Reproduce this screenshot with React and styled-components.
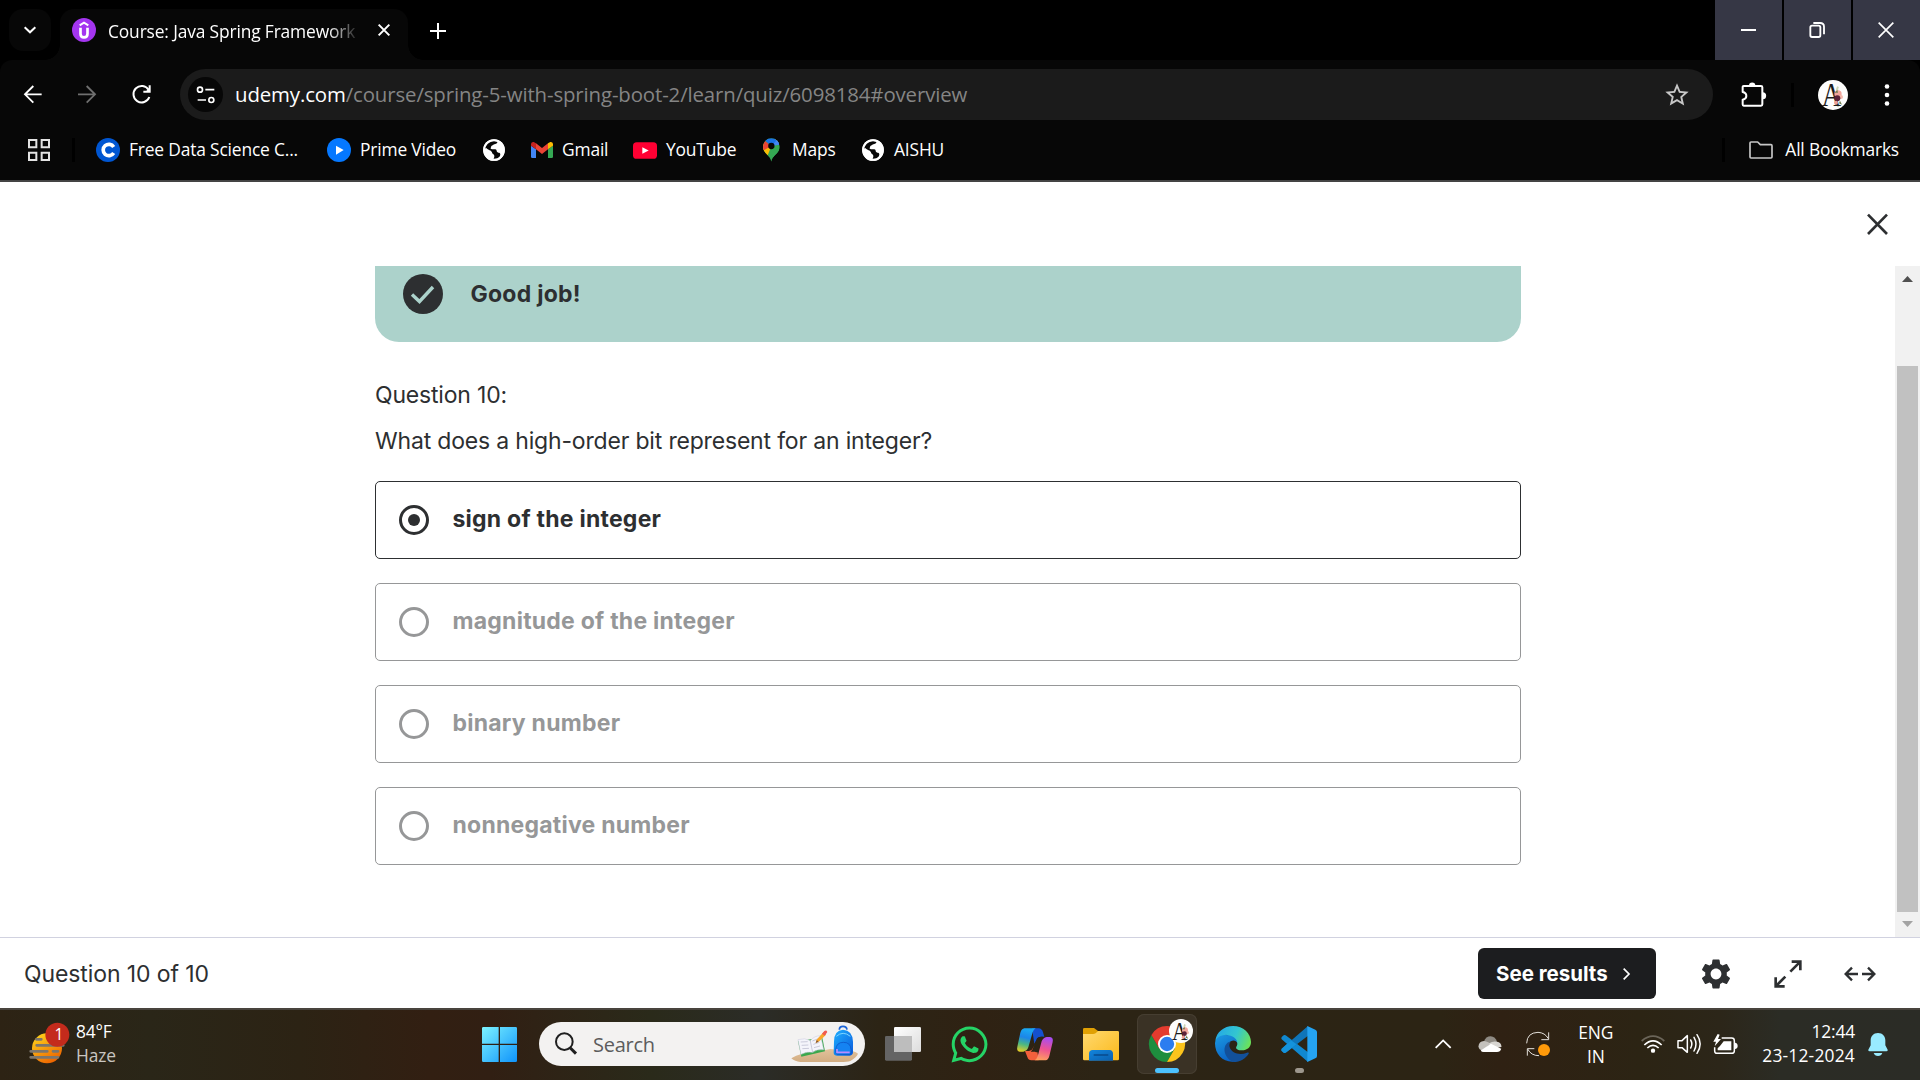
import React from "react";
import styled, { createGlobalStyle, css } from "styled-components";
import { FaWhatsapp } from "react-icons/fa";
import { MdSettings, MdStarBorder } from "react-icons/md";

const GlobalStyle = createGlobalStyle`
  * { box-sizing: border-box; }
  body { margin: 0; background: #000; overflow: hidden; }
  button { border: 0; margin: 0; padding: 0; background: none; color: inherit; font: inherit; }
  svg { display: block; flex: none; overflow: visible; }
`;

const UI_FONT = `"Open Sans", "Noto Sans", sans-serif`;
const PAGE_FONT = `Inter, Roboto, sans-serif`;

/* ---------- shell ---------- */

const Screen = styled.div`
  width: 1920px;
  height: 1080px;
  display: flex;
  flex-direction: column;
  font-family: ${UI_FONT};
  font-size: 17.4px;
  letter-spacing: -0.17px;
  white-space: nowrap;
`;

/* ---------- tab strip ---------- */

const TabStrip = styled.header`
  height: 60px;
  flex: none;
  display: flex;
  background: #000;
  color: #fff;
`;

const TabSearch = styled.button`
  width: 42px;
  height: 42px;
  margin: 9px 9px 0 9px;
  border-radius: 14px;
  background: #070707;
  display: grid;
  place-items: center;
`;

const Tab = styled.div`
  position: relative;
  width: 348px;
  height: 51px;
  margin-top: 9px;
  padding: 0 18px 9px 12px;
  border-radius: 14px 14px 0 0;
  background: #070707;
  display: flex;
  align-items: center;

  &::before,
  &::after {
    content: "";
    position: absolute;
    bottom: 0;
    width: 15px;
    height: 15px;
  }
  &::before {
    right: 100%;
    background: radial-gradient(circle at 0 0, transparent 14.5px, #070707 15px);
  }
  &::after {
    left: 100%;
    background: radial-gradient(circle at 100% 0, transparent 14.5px, #070707 15px);
  }
`;

const TabTitle = styled.span`
  width: 252px;
  margin: 2px 0 0 12px;
  line-height: 24px;
  letter-spacing: -0.15px;
  mask-image: linear-gradient(90deg, #000 220px, transparent 252px);
`;

const TabClose = styled.button`
  margin-left: auto;
`;

const NewTab = styled.button`
  margin: 22px 0 0 22px;
  height: 17px;
`;

const WindowControls = styled.div`
  margin-left: auto;
  display: flex;
  gap: 2px;
`;

const WindowButton = styled.button`
  width: 67px;
  height: 60px;
  padding-right: ${(p) => p.$shift || 0}px;
  background: #363745;
  display: grid;
  place-items: center;
`;

/* ---------- toolbar ---------- */

const ToolbarBack = styled.div`
  flex: none;
  background: #000;
`;

const Toolbar = styled.div`
  height: 69px;
  padding: 0 27px 0 24px;
  border-radius: 12px 12px 0 0;
  background: #070707;
  color: #fff;
  display: flex;
  align-items: center;
`;

const NavButtons = styled.nav`
  display: flex;
  gap: 36px;
  margin-right: 29px;
`;

const AddressBar = styled.div`
  width: 1533px;
  height: 51px;
  flex: none;
  border-radius: 26px;
  padding: 0 22px 0 8px;
  background: #1b1b1b;
  display: flex;
  align-items: center;
`;

const SiteInfo = styled.button`
  width: 35px;
  height: 35px;
  border-radius: 50%;
  background: #070707;
  display: grid;
  place-items: center;
`;

const Address = styled.div`
  margin: 0 auto 2px 12px;
  font-size: 20.4px;
  letter-spacing: -0.12px;
  line-height: 28px;
  color: #858585;
`;

const Host = styled.span`
  color: #fff;
`;

const Divider = styled.i`
  width: 3px;
  height: 24px;
  background: #000;
`;

const ToolbarTools = styled.div`
  margin-left: 28px;
  display: flex;
  align-items: center;
  gap: 24px;
`;

const MenuDots = styled.button`
  margin-left: 9px;
`;

/* ---------- bookmarks ---------- */

const BookmarkBar = styled.div`
  height: 53px;
  flex: none;
  padding: 0 21px 9px 28px;
  border-bottom: 2px solid #444;
  background: #070707;
  color: #fff;
  display: flex;
  align-items: center;
`;

const BookmarkList = styled.div`
  display: flex;
  align-items: center;
`;

const BarDivider = styled(Divider)`
  margin: 0 21px 0 22px;
`;

const Bookmark = styled.a`
  width: ${(p) => p.$width}px;
  display: flex;
  align-items: center;
  gap: ${(p) => p.$gap || 10}px;
`;

const BookmarkLabel = styled.span`
  line-height: 24px;
  margin-bottom: 2px;
`;

const AllBookmarks = styled.div`
  margin-left: auto;
  display: flex;
  align-items: center;
  gap: 12px;

  ${Divider} {
    margin-right: 12px;
  }
`;

/* ---------- quiz page ---------- */

const Page = styled.main`
  flex: 1;
  min-height: 0;
  background: #fff;
  color: #2d2f31;
  font-family: ${PAGE_FONT};
  font-size: 23px;
  letter-spacing: -0.18px;
  display: flex;
  flex-direction: column;
`;

const PageHeader = styled.div`
  height: 84px;
  flex: none;
  padding-right: 32px;
  display: flex;
  align-items: center;
  justify-content: flex-end;
`;

const ScrollArea = styled.div`
  height: 671px;
  display: flex;
`;

const QuizBody = styled.section`
  flex: 1;
  padding: 0 374px 0 375px;
`;

const Banner = styled.div`
  height: 76px;
  padding: 8px 28px 0;
  border-radius: 0 0 24px 24px;
  background: #acd2cb;
  display: flex;
  align-items: flex-start;
  gap: 27.5px;
  font-weight: 700;
  letter-spacing: 0.25px;
  line-height: 40px;
`;

const QuestionNumber = styled.div`
  margin-top: 38px;
  line-height: 30px;
`;

const QuestionText = styled.p`
  margin: 16px 0 25px;
  line-height: 30px;
`;

const Answers = styled.ul`
  list-style: none;
  margin: 0;
  padding: 0;
  display: flex;
  flex-direction: column;
  gap: 24px;
`;

const Answer = styled.li`
  height: 78px;
  padding-left: 23px;
  border: 1px solid currentColor;
  border-radius: 5px;
  color: ${(p) => (p.$selected ? "#2d2f31" : "#969798")};
  display: flex;
  align-items: center;
  gap: 23.5px;
  font-weight: 700;
  letter-spacing: 0.24px;
`;

const AnswerText = styled.span`
  line-height: 30px;
  margin-bottom: 2px;
`;

const Radio = styled.span`
  width: 30px;
  height: 30px;
  border: 3px solid currentColor;
  border-radius: 50%;
  display: grid;
  place-items: center;

  ${(p) =>
    p.$checked &&
    css`
      &::after {
        content: "";
        width: 12px;
        height: 12px;
        border-radius: 50%;
        background: currentColor;
      }
    `}
`;

const ScrollBar = styled.div`
  width: 25px;
  background: #f1f1f1;
  padding: 10px 2px;
  display: flex;
  flex-direction: column;
  align-items: center;
`;

const ScrollThumb = styled.div`
  width: 21px;
  height: 546px;
  margin: 84px 0 9px;
  background: #c1c1c1;
`;

const QuizFooter = styled.footer`
  height: 71px;
  flex: none;
  padding: 1px 42px 0 24px;
  border-top: 1px solid #d1d2e0;
  display: flex;
  align-items: center;
  letter-spacing: -0.1px;
`;

const FooterTools = styled.div`
  margin-left: auto;
  display: flex;
  align-items: center;
`;

const ResultsButton = styled.button`
  width: 178px;
  height: 51px;
  margin-right: 42px;
  padding: 0 26px 0 18px;
  border-radius: 6px;
  background: #1c1d1f;
  color: #fff;
  display: flex;
  align-items: center;
  justify-content: space-between;
  font-size: 20.5px;
  font-weight: 700;
  letter-spacing: 0;
`;

const FooterIcon = styled.button`
  width: 36px;
  display: grid;
  place-items: center;
  margin-right: ${(p) => p.$after || 0}px;
`;

/* ---------- taskbar ---------- */

const TaskbarRoot = styled.div`
  height: 72px;
  flex: none;
  padding-bottom: 2px;
  border-top: 2px solid #49443d;
  background: linear-gradient(90deg, #2d2314 0, #2a2618 150px, #2c2314 300px, #321f12 430px, #311f13 490px, #2a2a1a 650px, #2b2c27 760px, #2c2415 880px, #2f2213 980px, #2c2415 1100px, #2c2414 1440px, #2f2113 1500px, #2c2414 1640px, #2c2619 1720px, #2b2c25 1780px, #2b2c26 1920px);
  color: #fff;
  display: flex;
  align-items: center;
`;

const Weather = styled.div`
  width: 453px;
  padding: 0 0 2px 29px;
  display: flex;
  align-items: center;
  gap: 6px;
`;

const Stack = styled.div`
  display: flex;
  flex-direction: column;
  align-items: ${(p) => p.$align || "flex-start"};
  line-height: 24px;
  padding-bottom: ${(p) => p.$lift || 0}px;
`;

const Muted = styled.span`
  color: #c9c6c1;
`;

const DateText = styled.span`
  letter-spacing: 0.2px;
`;

const StartButton = styled.button`
  width: 60px;
  height: 60px;
  margin-left: 16px;
  display: grid;
  place-items: center;
`;

const SearchBox = styled.div`
  width: 326px;
  height: 44px;
  margin: 0 8px 0 10px;
  padding: 0 6px 0 16px;
  border-radius: 22px;
  background: #f3f2f1;
  color: #5c5c5c;
  display: flex;
  align-items: center;
`;

const SearchText = styled.span`
  margin: 0 auto 0 16px;
  padding-top: 1px;
  font-size: 20px;
  letter-spacing: -0.25px;
  line-height: 28px;
`;

const AppRow = styled.div`
  display: flex;
  gap: 6px;
`;

const AppButton = styled.button`
  position: relative;
  width: 60px;
  height: 60px;
  border-radius: 7px;
  display: grid;
  place-items: center;
  ${(p) =>
    p.$active &&
    css`
      background: #3a3225;
      box-shadow: inset 0 0 0 1px #463e31;
    `}
`;

const AppBadge = styled.span`
  position: absolute;
  top: 5px;
  left: 32px;
`;

const RunningMark = styled.i`
  position: absolute;
  bottom: 1px;
  left: calc(50% - ${(p) => p.$width / 2}px);
  width: ${(p) => p.$width}px;
  height: 5px;
  border-radius: 3px;
  background: ${(p) => p.$color};
`;

const Tray = styled.div`
  margin-left: auto;
  padding-right: 32px;
  display: flex;
  align-items: center;
`;

const TraySlot = styled.div`
  width: ${(p) => p.$width}px;
  display: flex;
  justify-content: ${(p) => p.$justify || "flex-start"};
`;

const Language = styled(Stack)`
  margin-right: 28px;
`;

/* ---------- drawings ---------- */

const Stroke = ({ box, w, h, d, sw = 6, color = "currentColor", ...rest }) => (
  <svg viewBox={box} width={w} height={h} fill="none" stroke={color} strokeWidth={sw} {...rest}>
    <path d={d} />
  </svg>
);

const UdemyMark = () => (
  <svg width="24" height="24" viewBox="0 0 72 72" fill="none" stroke="#fff">
    <circle cx="36" cy="36" r="36" fill="#a435f0" stroke="none" />
    <path d="M23 22 L36 14 L49 22" strokeWidth="6" />
    <path d="M25.500 29 V47 Q25.500 58 36 58 Q46.500 58 46.500 47 V29" strokeWidth="8" />
  </svg>
);

const SiteInfoIcon = () => (
  <svg width="20" height="18" viewBox="588 257 58 54" fill="none" stroke="#fff" strokeWidth="5">
    <circle cx="599" cy="268" r="7.500" />
    <circle cx="633" cy="299" r="7.500" />
    <path d="M615 268 H642 M592 299 H617" />
  </svg>
);

const PuzzleIcon = () => (
  <svg width="26" height="26" viewBox="424 242 78 78">
    <path
      d="M429 256 Q429 254 432 254 H484 Q488 254 488 258 V309 Q488 313 484 313 H432 Q429 313 429 309 V295 Q440 293 440 284 Q440 274 429 272 Z"
      fill="none"
      stroke="#fff"
      strokeWidth="6"
      strokeLinejoin="round"
    />
    <path d="M448 253 A9.500 9.500 0 0 1 467 253 Z M489 273 A10 10 0 0 1 489 294 Z" fill="#fff" />
  </svg>
);

const Avatar = ({ size }) => (
  <svg width={size} height={size} viewBox="0 0 90 90">
    <circle cx="45" cy="45" r="45" fill="#fdfdfc" />
    <path d="M60 20 Q54 32 62 44 M52 66 Q54 76 62 80" stroke="#cbd6b6" strokeWidth="6" fill="none" />
    <text x="11" y="78" fontFamily="Liberation Serif, serif" fontSize="98" textLength="58" lengthAdjust="spacingAndGlyphs" fill="#1c1c1c">A</text>
    <circle cx="60" cy="42" r="11" fill="#f2a59c" />
    <circle cx="69" cy="51" r="6" fill="#f4b9ac" />
    <circle cx="58" cy="55" r="9" fill="#5b2138" />
    <circle cx="54" cy="68" r="6" fill="#ef9f93" />
    <path d="M66 62 L72 74 L63 70 Z M50 38 l8 -8 l2 8z" fill="#6d7c4b" />
  </svg>
);

const AppsIcon = () => (
  <svg width="22" height="22" viewBox="0 0 66 66" fill="none" stroke="#e3e3e3" strokeWidth="6">
    <path d="M3 3H25V25H3Z M41 3H63V25H41Z M3 41H25V63H3Z M41 41H63V63H41Z" />
  </svg>
);

const CourseMark = () => (
  <svg width="24" height="24" viewBox="0 0 72 72">
    <circle cx="36" cy="36" r="36" fill="#0056d2" />
    <path d="M53 27 A17 17 0 1 0 53 45" fill="none" stroke="#fff" strokeWidth="11" />
  </svg>
);

const PrimeMark = () => (
  <svg width="24" height="24" viewBox="0 0 72 72">
    <circle cx="36" cy="36" r="36" fill="#0578ff" />
    <path d="M27 23 L50 36 L27 50 Z" fill="#fff" />
  </svg>
);

const GlobeMark = () => (
  <svg width="22" height="22" viewBox="9 237 66 66">
    <circle cx="42" cy="270" r="32.500" fill="#fff" />
    <path
      d="M52 243 C54 250 47 252 42 253 C39 257 33 256 33 262 C29 268 36 268 46 268 C52 269 48 277 55 278 C62 278 62 283 59 290 C55 297 47 298 39 297 C40 289 34 290 33 284 C33 277 22 276 15 270 C14 255 25 243 40 242 Z"
      fill="#070707"
    />
    <path d="M19 264 C24 270 34 271 36 277 C36 283 44 282 43 290 L40 299 C22 298 12 284 14 266 Z" fill="#fff" />
    <circle cx="42" cy="270" r="29.500" fill="none" stroke="#fff" strokeWidth="6" />
  </svg>
);

const GmailMark = () => (
  <svg width="22" height="16" viewBox="153 246 66 48">
    <path d="M153 257 L168 268 V294 H157 Q153 294 153 290 Z" fill="#4285f4" />
    <path d="M219 257 L204 268 V294 H215 Q219 294 219 290 Z" fill="#34a853" />
    <path d="M168 250 L186 264 L204 250 V268 L186 282 L168 268 Z" fill="#ea4335" />
    <path d="M153 252 Q154 245 161 246 L168 250 V268 L153 257 Z" fill="#c5221f" />
    <path d="M219 252 Q218 245 211 246 L204 250 V268 L219 257 Z" fill="#fbbc04" />
  </svg>
);

const YoutubeMark = () => (
  <svg width="24" height="17" viewBox="0 0 72 50">
    <rect width="72" height="50" rx="11" fill="#ff0033" />
    <path d="M28 15 L47 25 L28 35 Z" fill="#fff" />
  </svg>
);

const MapsMark = () => (
  <svg width="17" height="24" viewBox="848 234 51 72">
    <defs>
      <clipPath id="pin">
        <path d="M873 305 C870 285 848 280 848 260 A25 25 0 0 1 898 260 C898 280 876 285 873 305Z" />
      </clipPath>
    </defs>
    <g clipPath="url(#pin)">
      <rect x="846" y="232" width="54" height="76" fill="#34a853" />
      <path d="M846 285 L900 220 V240 L858 292 Z" fill="#fbbc04" />
      <path d="M846 250 L873 258 L846 286 Z" fill="#fbbc04" />
      <path d="M846 236 L873 258 L848 272 Z" fill="#ea4335" />
      <path d="M852 240 L870 230 L900 232 V250 L873 258 Z" fill="#1a73e8" />
      <path d="M873 258 L892 238 L900 252 L880 268 Z" fill="#4285f4" />
      <path d="M873 258 L898 254 V290 L860 292 Z" fill="#34a853" />
    </g>
    <circle cx="873" cy="258" r="9.500" fill="#070707" />
  </svg>
);

const FolderOutline = () => (
  <svg width="24" height="18" viewBox="447 423 72 54" fill="none" stroke="#c7c7c7" strokeWidth="5" strokeLinejoin="round">
    <path d="M450 429 Q450 426 453 426 H473 L481 434 H513 Q516 434 516 437 V471 Q516 474 513 474 H453 Q450 474 450 471 Z" />
  </svg>
);

const CheckBadge = () => (
  <svg width="40" height="40" viewBox="0 0 40 40">
    <circle cx="20" cy="20" r="20" fill="#2d2f31" />
    <path d="M9 20.500 L16.500 27.500 L30 13" fill="none" stroke="#acd2cb" strokeWidth="3.400" />
  </svg>
);

const ExpandIcon = () => (
  <svg width="28" height="28" viewBox="1002 180 84 84" fill="none" stroke="#2d2f31" strokeWidth="8">
    <path d="M1055 185 H1081 V211 M1081 185 L1051 215 M1007 232 V259 H1034 M1007 259 L1036 230" />
  </svg>
);

const WideIcon = () => (
  <svg width="32" height="16" viewBox="1212 198 96 48" fill="none" stroke="#2d2f31" strokeWidth="7">
    <path d="M1216 222 H1254 M1236 203 L1217 222 L1236 241 M1266 222 H1304 M1284 203 L1303 222 L1284 241" />
  </svg>
);

const HazeIcon = () => (
  <svg width="41" height="42" viewBox="87 350 123 126">
    <defs>
      <linearGradient id="sun" x1="0" y1="0" x2="0.600" y2="1">
        <stop offset="0.100" stopColor="#ffd21a" />
        <stop offset="1" stopColor="#ee6600" />
      </linearGradient>
    </defs>
    <circle cx="141" cy="429" r="45" fill="url(#sun)" />
    <path d="M109 402 H124 M110 420 H190 M92 438 H142 M159 438 H174 M92 456 H174" stroke="#7d766c" strokeWidth="8" strokeLinecap="round" />
    <circle cx="172" cy="388" r="36" fill="#c42b1c" />
    <text x="177" y="405" textAnchor="middle" fontFamily="Open Sans, sans-serif" fontSize="47" fill="#fff">1</text>
  </svg>
);

const WindowsLogo = () => (
  <svg width="35" height="35" viewBox="0 0 105 105">
    <defs>
      <linearGradient id="win" gradientUnits="userSpaceOnUse" x1="0" y1="0" x2="105" y2="105">
        <stop offset="0" stopColor="#7cf3ff" />
        <stop offset="1" stopColor="#0f93fb" />
      </linearGradient>
    </defs>
    <path d="M4 0H50V50H0V4Q0 0 4 0Z M54 0H101Q105 0 105 4V50H54Z M0 54H50V105H4Q0 105 0 101Z M54 54H105V101Q105 105 101 105H54Z" fill="url(#win)" />
  </svg>
);

const SearchArt = () => (
  <svg width="68" height="38" viewBox="32 50 204 114">
    <defs>
      <linearGradient id="pack" x1="0" y1="0" x2="1" y2="1">
        <stop offset="0" stopColor="#1fb0ff" />
        <stop offset="1" stopColor="#0a5bdc" />
      </linearGradient>
      <linearGradient id="sand" x1="0" y1="0" x2="0" y2="1">
        <stop offset="0" stopColor="#e2c29b" />
        <stop offset="1" stopColor="#d2ad82" />
      </linearGradient>
    </defs>
    <path d="M33 150 Q60 134 100 132 L150 122 L180 125 Q225 126 233 136 Q228 148 210 158 Q200 161 180 161 H60 Q44 160 33 150 Z" fill="url(#sand)" />
    <path d="M53 98 L63 145 L134 129 L126 88 Z" fill="#3aa84c" />
    <path d="M53 94 Q74 87 90 97 Q102 82 121 82 L130 124 Q108 122 97 132 Q82 128 62 138 Z" fill="#f4f4fb" stroke="#c9c9dc" strokeWidth="1.500" />
    <path d="M90 98 L97 132 M61 101 L82 100 M64 111 L84 110 M66 121 L86 120 M96 98 L114 91 M99 108 L117 102 M101 118 L119 113" stroke="#b3b3c8" strokeWidth="2" fill="none" />
    <path d="M106 104 L110 93 L130 71 L137 79 L117 99 Z" fill="#f9a72b" />
    <path d="M125 76 L132 68 Q138 64 141 71 L133 82 Z" fill="#f05a4f" />
    <path d="M106 104 L109 95 L115 100 Z" fill="#8a5a33" />
    <path d="M177 64 Q177 54 188 54 Q199 54 200 64" fill="none" stroke="#1b64d8" strokeWidth="5" />
    <path d="M161 100 Q161 66 188 64 Q217 66 218 100 V132 Q218 141 208 142 H171 Q161 142 160 134 Z" fill="url(#pack)" />
    <path d="M166 129 V124 Q168 102 189 102 Q211 102 212 124 V134 Q211 138 206 138 H172 Q166 138 166 129Z" fill="#1583f2" stroke="#0b4fc0" strokeWidth="2" />
    <path d="M170 122 V132 H208" fill="none" stroke="#b98cff" strokeWidth="5" />
    <path d="M168 84 Q188 66 210 84" fill="none" stroke="#7fd6ff" strokeWidth="3" />
  </svg>
);

const TaskViewIcon = () => (
  <svg width="36" height="34" viewBox="75 81 108 102">
    <defs>
      <linearGradient id="tv" x1="0" y1="0" x2="1" y2="1">
        <stop offset="0" stopColor="#ffffff" />
        <stop offset="1" stopColor="#dcdcdc" />
      </linearGradient>
    </defs>
    <rect x="75" y="108" width="81" height="74" rx="4" fill="#646464" />
    <rect x="102" y="81" width="81" height="75" rx="4" fill="url(#tv)" />
    <path d="M102 108 H156 V156 H106 Q102 156 102 152 Z" fill="#bdbdbd" />
  </svg>
);

const CopilotIcon = () => (
  <svg width="36" height="33" viewBox="471 81 108 99">
    <defs>
      <linearGradient id="cpA" x1="0.300" y1="0" x2="0.100" y2="1">
        <stop offset="0" stopColor="#1aa7f2" />
        <stop offset="0.350" stopColor="#1c86e8" />
        <stop offset="0.650" stopColor="#4cb782" />
        <stop offset="1" stopColor="#f2cf1d" />
      </linearGradient>
      <linearGradient id="cpB" x1="0.500" y1="0" x2="0.300" y2="1">
        <stop offset="0" stopColor="#a84df0" />
        <stop offset="0.500" stopColor="#ee5392" />
        <stop offset="1" stopColor="#ffa25c" />
      </linearGradient>
    </defs>
    <path d="M516 82 H536 Q546 83 549 94 L553 107 H543 Q534 107 531 115 L523 128 Z" fill="#1450cf" />
    <path d="M495 150 H507 Q516 149 519 141 L528 125 L536 178 H514 Q505 178 502 168 Z" fill="#f4603c" />
    <path d="M531 112 Q534 107 543 107 H550 L534 152 Q531 155 525 152 H512 Q517 149 519 141 Z" fill="#2c2415" />
    <path d="M493 82 H527 Q521 85 518 94 L505 139 Q501 150 490 152 H479 Q469 150 472 137 L481 95 Q485 83 493 82 Z" fill="url(#cpA)" />
    <path d="M557 178 H524 Q530 175 533 166 L545 121 Q549 110 560 108 H570 Q581 110 578 123 L568 165 Q565 177 557 178 Z" fill="url(#cpB)" />
  </svg>
);

const ExplorerIcon = () => (
  <svg width="36" height="33" viewBox="669 84 108 99">
    <defs>
      <linearGradient id="fold" x1="0" y1="0" x2="1" y2="1">
        <stop offset="0" stopColor="#ffd970" />
        <stop offset="1" stopColor="#fbb91a" />
      </linearGradient>
      <linearGradient id="tray" x1="0" y1="0" x2="1" y2="1">
        <stop offset="0" stopColor="#1285dd" />
        <stop offset="1" stopColor="#0a5fae" />
      </linearGradient>
    </defs>
    <path d="M669 88 Q669 84 673 84 H702 L714 93 V106 H669 Z" fill="#e0a004" />
    <path d="M669 102 H700 Q706 102 711 96 L714 93 H773 Q777 93 777 97 V177 Q777 181 773 181 H673 Q669 181 669 177 Z" fill="url(#fold)" />
    <path d="M687 182 V160 Q688 151 697 150 H749 Q758 151 759 160 V182 Z" fill="url(#tray)" />
    <path d="M703 165 H743" stroke="#084a8c" strokeWidth="5" strokeLinecap="round" />
  </svg>
);

const ChromeIcon = () => (
  <svg width="36" height="36" viewBox="-54 -54 108 108">
    <path d="M-46.800 -27 A54 54 0 0 0 0 54 L23.400 13.500 L0 0 L-23.400 13.500 Z" fill="#1e8e3e" />
    <path d="M0 -27 H46.800 A54 54 0 0 1 0 54 L23.400 13.500 L0 0 Z" fill="#fcc41c" />
    <path d="M-46.800 -27 A54 54 0 0 1 46.800 -27 H0 V0 L-23.400 13.500 Z" fill="#e33b2e" />
    <circle r="27" fill="#fff" />
    <circle r="21.500" fill="#2c7df0" />
  </svg>
);

const EdgeIcon = () => (
  <svg width="36" height="36" viewBox="1065 78 108 108">
    <defs>
      <linearGradient id="edA" x1="0" y1="0.300" x2="1" y2="0.600">
        <stop offset="0" stopColor="#24a8e6" />
        <stop offset="0.550" stopColor="#33c6d0" />
        <stop offset="1" stopColor="#6be25a" />
      </linearGradient>
      <linearGradient id="edB" x1="0" y1="0" x2="0.500" y2="1">
        <stop offset="0" stopColor="#1b9ae2" />
        <stop offset="1" stopColor="#0b62c4" />
      </linearGradient>
    </defs>
    <path d="M1066 122 C1069 97 1092 78 1119 78 C1150 78 1173 101 1173 126 C1173 142 1161 151 1146 151 C1133 151 1126 146 1129 140 C1135 132 1131 124 1126 119 L1098 104 Z" fill="url(#edA)" />
    <path d="M1065 130 C1066 112 1083 105 1098 105 C1118 105 1132 116 1132 130 C1128 118 1112 120 1106 130 C1098 145 1104 168 1122 185 C1090 188 1065 164 1065 130Z" fill="url(#edB)" />
    <path d="M1107 126 C1087 134 1088 172 1120 186 C1141 186 1157 175 1166 161 C1167 158 1165 157 1161 158 C1140 167 1115 160 1109 142 C1107 136 1108 130 1112 125 Z" fill="#12509a" />
  </svg>
);

const CodeIcon = () => (
  <svg width="36" height="36" viewBox="1263 78 108 108">
    <path d="M1265 118 Q1262 113 1266 110 L1271 106 Q1275 104 1279 107 L1344 157 V186 Z" fill="#1088d0" />
    <path d="M1265 146 Q1262 151 1266 154 L1271 158 Q1275 160 1279 157 L1344 107 V78 Z" fill="#0f75b9" />
    <path d="M1265 146 Q1262 151 1266 154 L1271 158 Q1275 160 1279 157 L1310 133 L1293 121 Z" fill="#1493dc" />
    <path d="M1342 78 L1366 89 Q1371 91 1371 96 V168 Q1371 173 1366 175 L1342 186 Z" fill="#25a3f1" />
  </svg>
);

const CloudIcon = () => (
  <svg width="24" height="16" viewBox="117 407 72 50">
    <path d="M134 425 Q140 408 155 408 Q170 409 175 425 L155 440 Z" fill="#8f8b84" />
    <path d="M117 440 Q118 424 134 423 Q141 423 156 432 L130 453 Q118 450 117 440 Z" fill="#c4c1bc" />
    <path d="M175 425 Q188 427 189 441 L158 446 L150 430 Q162 422 175 425 Z" fill="#d8d6d2" />
    <path d="M124 452 L156 431 L188 447 Q185 457 175 457 H133 Q127 457 124 452 Z" fill="#fff" />
  </svg>
);

const SyncIcon = () => (
  <svg width="24" height="26" viewBox="261 393 72 78" fill="none" stroke="#e4e1dc" strokeWidth="3">
    <path d="M263 430 Q264 398 297 397 Q318 398 328 416 M329 397 V419 H307 M265 467 V446 H286 M266 447 Q276 467 300 467" />
    <circle cx="315" cy="450" r="18" fill="#ff9a0a" stroke="none" />
  </svg>
);

const WifiIcon = () => (
  <svg width="24" height="18" viewBox="603 403 72 54" fill="none" strokeWidth="5">
    <path d="M605 421 Q639 392 673 421" stroke="#6b6559" />
    <path d="M613 433 Q639 408 665 433 M622 442 Q639 426 656 442" stroke="#fff" />
    <circle cx="639" cy="450" r="6.500" fill="#fff" />
  </svg>
);

const SpeakerIcon = () => (
  <svg width="25" height="20" viewBox="709 402 75 60" fill="none" stroke="#fff" strokeWidth="4.500" strokeLinejoin="round" strokeLinecap="round">
    <path d="M712 422 H724 L740 407 V457 L724 443 H712 Z M750 420 Q757 432 750 444 M760 412 Q772 432 760 453 M769 404 Q788 432 769 460" />
  </svg>
);

const BatteryIcon = () => (
  <svg width="25" height="21" viewBox="817 396 75 63">
    <path d="M843 408 H873 Q881 408 881 416 V447 Q881 454 873 454 H829 Q822 454 822 447 V436" fill="none" stroke="#fff" strokeWidth="4.500" />
    <path d="M883 422 Q891 423 891 432 Q891 440 883 441 Z M849 418 H872 V445 H831 V439 L838 432 Z" fill="#fff" />
    <path d="M831 396 L818 419 H826 L822 433 L841 411 H832 L837 398 Z" fill="#fff" />
  </svg>
);

const BellIcon = () => (
  <svg width="20" height="23" viewBox="1284 399 60 69" fill="#99ebff">
    <path d="M1314 399 C1300 399 1292 409 1292 421 V436 L1285 449 Q1284 454 1289 454 H1339 Q1344 454 1343 449 L1336 436 V421 C1336 409 1328 399 1314 399 Z" />
    <path d="M1301 459 H1327 Q1324 468 1314 468 Q1304 468 1301 459 Z" />
  </svg>
);

/* ---------- data ---------- */

const bookmarks = [
  { label: "Free Data Science C...", icon: <CourseMark />, width: 231, gap: 9 },
  { label: "Prime Video", icon: <PrimeMark />, width: 156, gap: 9 },
  { label: "", icon: <GlobeMark />, width: 48 },
  { label: "Gmail", icon: <GmailMark />, width: 102, gap: 9 },
  { label: "YouTube", icon: <YoutubeMark />, width: 130, gap: 9 },
  { label: "Maps", icon: <MapsMark />, width: 99, gap: 12 },
  { label: "AISHU", icon: <GlobeMark />, width: 90 },
];

const answers = ["sign of the integer", "magnitude of the integer", "binary number", "nonnegative number"];

const apps = [
  { name: "task-view", icon: <TaskViewIcon /> },
  { name: "whatsapp", icon: <FaWhatsapp size={41} color="#25d366" /> },
  { name: "copilot", icon: <CopilotIcon /> },
  { name: "explorer", icon: <ExplorerIcon /> },
  { name: "chrome", icon: <ChromeIcon />, active: true, mark: [24, "#4cc2ff"] },
  { name: "edge", icon: <EdgeIcon /> },
  { name: "code", icon: <CodeIcon />, mark: [9, "#9d978d"] },
];

/* ---------- sections ---------- */

const BrowserTabs = () => (
  <TabStrip>
    <TabSearch>
      <Stroke box="72 78 36 24" w={12} h={8} d="M74 82 L90 97 L106 82" sw={6} />
    </TabSearch>
    <Tab>
      <UdemyMark />
      <TabTitle>Course: Java Spring Framework</TabTitle>
      <TabClose>
        <Stroke box="1133 72 36 36" w={12} h={12} d="M1135 74 L1167 106 M1167 74 L1135 106" sw={6} />
      </TabClose>
    </Tab>
    <NewTab>
      <Stroke box="0 0 48 48" w={16} h={16} d="M0 24 H48 M24 0 V48" sw={6} />
    </NewTab>
    <WindowControls>
      <WindowButton>
        <Stroke box="0 0 45 6" w={15} h={2} d="M0 3 H45" sw={6} />
      </WindowButton>
      <WindowButton $shift={2}>
        <Stroke box="0 0 48 48" w={16} h={16} d="M9 11 H29 Q34 11 34 16 V40 Q34 45 29 45 H9 Q4 45 4 40 V16 Q4 11 9 11 Z M13 3 H33 Q45 3 45 14 V37" sw={5.5} />
      </WindowButton>
      <WindowButton $shift={2}>
        <Stroke box="0 0 48 48" w={16} h={16} d="M2 2 L46 46 M46 2 L2 46" sw={5} />
      </WindowButton>
    </WindowControls>
  </TabStrip>
);

const BrowserToolbar = () => (
  <ToolbarBack>
    <Toolbar>
      <NavButtons>
        <Stroke box="73 256 54 54" w={18} h={18} d="M126 284 H78 M101 259 L76 284 L101 309" sw={5.5} />
        <Stroke box="234 256 54 54" w={18} h={18} d="M234 284 H284 M260 259 L285 284 L260 309" sw={5.5} color="#6f6f6f" />
        <svg width="19" height="19" viewBox="395 255 57 57" fill="none" stroke="#fff" strokeWidth="6">
          <path d="M445 270 A24.500 24.500 0 1 0 447 291" />
          <path d="M448 256 V275 H429" />
          <path d="M436 275 L448 262 V275 Z" fill="#fff" stroke="none" />
        </svg>
      </NavButtons>
      <AddressBar>
        <SiteInfo>
          <SiteInfoIcon />
        </SiteInfo>
        <Address>
          <Host>udemy.com</Host>/course/spring-5-with-spring-boot-2/learn/quiz/6098184#overview
        </Address>
        <MdStarBorder size={28} color="#c7c7c7" />
      </AddressBar>
      <ToolbarTools>
        <PuzzleIcon />
        <Divider />
        <Avatar size={30} />
        <MenuDots>
          <svg width="12" height="24" viewBox="0 0 12 24" fill="#fff">
            <circle cx="6" cy="3.500" r="2.300" />
            <circle cx="6" cy="12" r="2.300" />
            <circle cx="6" cy="20.500" r="2.300" />
          </svg>
        </MenuDots>
      </ToolbarTools>
    </Toolbar>
  </ToolbarBack>
);

const Bookmarks = () => (
  <BookmarkBar>
    <AppsIcon />
    <BarDivider />
    <BookmarkList>
      {bookmarks.map((b, i) => (
        <Bookmark key={i} $width={b.width} $gap={b.gap}>
          {b.icon}
          {b.label && <BookmarkLabel>{b.label}</BookmarkLabel>}
        </Bookmark>
      ))}
    </BookmarkList>
    <AllBookmarks>
      <Divider />
      <FolderOutline />
      <BookmarkLabel>All Bookmarks</BookmarkLabel>
    </AllBookmarks>
  </BookmarkBar>
);

const Quiz = () => (
  <Page>
    <PageHeader>
      <Stroke box="803 641 63 63" w={21} h={21} d="M806 643 L863 701 M863 643 L806 701" sw={8} color="#2d2f31" />
    </PageHeader>
    <ScrollArea>
      <QuizBody>
        <Banner>
          <CheckBadge />
          Good job!
        </Banner>
        <QuestionNumber>Question 10:</QuestionNumber>
        <QuestionText>What does a high-order bit represent for an integer?</QuestionText>
        <Answers>
          {answers.map((text, i) => (
            <Answer key={text} $selected={i === 0}>
              <Radio $checked={i === 0} />
              <AnswerText>{text}</AnswerText>
            </Answer>
          ))}
        </Answers>
      </QuizBody>
      <ScrollBar>
        <svg width="11" height="6" viewBox="0 0 11 6"><path d="M5.500 0 L11 6 H0 Z" fill="#505050" /></svg>
        <ScrollThumb />
        <svg width="11" height="6" viewBox="0 0 11 6"><path d="M0 0 H11 L5.500 6 Z" fill="#a3a3a3" /></svg>
      </ScrollBar>
    </ScrollArea>
    <QuizFooter>
      <span>Question 10 of 10</span>
      <FooterTools>
        <ResultsButton>
          See results
          <Stroke box="548 205 21 36" w={7} h={12} d="M550 207 L566 223 L550 239" sw={5} />
        </ResultsButton>
        <FooterIcon $after={36}>
          <MdSettings size={36} />
        </FooterIcon>
        <FooterIcon $after={36}>
          <ExpandIcon />
        </FooterIcon>
        <FooterIcon>
          <WideIcon />
        </FooterIcon>
      </FooterTools>
    </QuizFooter>
  </Page>
);

const Taskbar = () => (
  <TaskbarRoot>
    <Weather>
      <HazeIcon />
      <Stack>
        <span>84°F</span>
        <Muted>Haze</Muted>
      </Stack>
    </Weather>
    <StartButton>
      <WindowsLogo />
    </StartButton>
    <SearchBox>
      <svg width="22" height="24" viewBox="285 98 66 72" fill="none" stroke="#1f1f1f">
        <circle cx="313" cy="127" r="25" strokeWidth="6" />
        <path d="M331 146 L348 163" strokeWidth="9" />
      </svg>
      <SearchText>Search</SearchText>
      <SearchArt />
    </SearchBox>
    <AppRow>
      {apps.map((a) => (
        <AppButton key={a.name} $active={a.active}>
          {a.icon}
          {a.name === "chrome" && (
            <AppBadge>
              <Avatar size={24} />
            </AppBadge>
          )}
          {a.mark && <RunningMark $width={a.mark[0]} $color={a.mark[1]} />}
        </AppButton>
      ))}
    </AppRow>
    <Tray>
      <TraySlot $width={43}>
        <Stroke box="44 101 49 30" w={16} h={10} d="M46 128 L69 105 L92 128" sw={5.5} />
      </TraySlot>
      <TraySlot $width={48}>
        <CloudIcon />
      </TraySlot>
      <TraySlot $width={52}>
        <SyncIcon />
      </TraySlot>
      <Language $align="center">
        <span>ENG</span>
        <span>IN</span>
      </Language>
      <TraySlot $width={36}>
        <WifiIcon />
      </TraySlot>
      <TraySlot $width={36}>
        <SpeakerIcon />
      </TraySlot>
      <TraySlot $width={49}>
        <BatteryIcon />
      </TraySlot>
      <Stack $align="flex-end" $lift={2}>
        <span>12:44</span>
        <DateText>23-12-2024</DateText>
      </Stack>
      <TraySlot $width={33} $justify="flex-end">
        <BellIcon />
      </TraySlot>
    </Tray>
  </TaskbarRoot>
);

export default function App() {
  return (
    <>
      <GlobalStyle />
      <Screen>
        <BrowserTabs />
        <BrowserToolbar />
        <Bookmarks />
        <Quiz />
        <Taskbar />
      </Screen>
    </>
  );
}
